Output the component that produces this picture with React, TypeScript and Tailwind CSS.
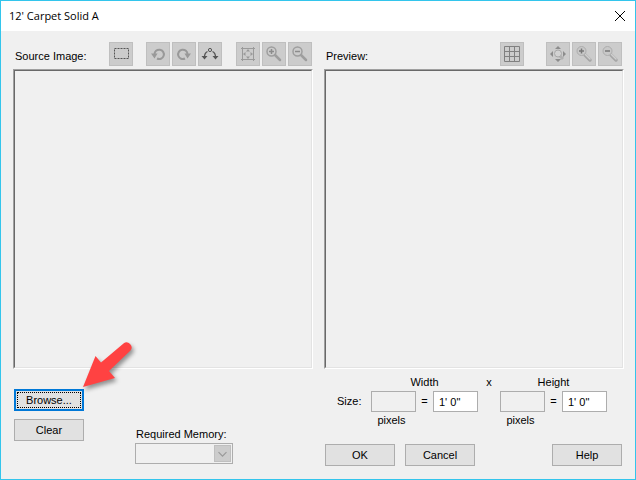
import { useState } from 'react';
import type { ButtonHTMLAttributes, ReactNode } from 'react';
import { twMerge } from 'tailwind-merge';

function ToolButton({ label, className, children }: { label: string; className?: string; children: ReactNode }) {
  return (
    <button
      type="button"
      disabled
      aria-label={label}
      className={twMerge('size-6 shrink-0 border border-[#bfbfbf] bg-[#cccccc]', className)}
    >
      <svg viewBox="1 1 22 22" className="block size-full" fill="none" aria-hidden="true">
        {children}
      </svg>
    </button>
  );
}

function PushButton({ className, ...props }: ButtonHTMLAttributes<HTMLButtonElement>) {
  return (
    <button
      type="button"
      className={twMerge(
        'flex h-[22px] w-[70px] items-center justify-center border border-[#adadad] bg-[#e1e1e1] text-black',
        className,
      )}
      {...props}
    />
  );
}

function RotateIcon() {
  return (
    <>
      <path d="M8.5 12.5 A4.7 4.7 0 1 1 11 16.5" stroke="#999999" strokeWidth="2" />
      <path d="M5 11.5 H11.5 L8.5 16.5 Z" fill="#999999" />
    </>
  );
}

function FlatMagnifier({ plus }: { plus?: boolean }) {
  return (
    <>
      <circle cx="9.5" cy="9.5" r="4.5" stroke="#9e9e9e" strokeWidth="1.5" />
      <path d={plus ? 'M7 9.5 H12 M9.5 7 V12' : 'M7 9.5 H12'} stroke="#8c8c8c" strokeWidth="1.5" />
      <path d="M13 13 L18 18" stroke="#9e9e9e" strokeWidth="2.5" strokeLinecap="round" />
    </>
  );
}

function ShadedMagnifier({ plus }: { plus?: boolean }) {
  return (
    <>
      <path d="M13 13 L18 18" stroke="#a6a6a6" strokeWidth="3.5" strokeLinecap="round" />
      <path d="M13.5 12.5 L18 17" stroke="#cfcfcf" strokeWidth="1.5" strokeLinecap="round" />
      <circle cx="9.5" cy="9" r="4.5" fill="#c8c8c8" stroke="#adadad" />
      <path d={plus ? 'M7 9 H12 M9.5 6.5 V11.5' : 'M7 9 H12'} stroke="#777777" strokeWidth="1.5" />
    </>
  );
}

function ImagePane({ label }: { label: string }) {
  return (
    <div
      role="img"
      aria-label={label}
      className="mt-[3px] h-[300px] border border-t-[#a0a0a0] border-r-white border-b-white border-l-[#a0a0a0]"
    >
      <div className="h-full border border-t-[#696969] border-r-[#e3e3e3] border-b-[#e3e3e3] border-l-[#696969]" />
    </div>
  );
}

function SizeFields({ name, value, onChange }: { name: string; value: string; onChange: (value: string) => void }) {
  return (
    <div className="grid grid-cols-[45px_17px_45px] text-center">
      <label htmlFor={name} className="col-span-3 h-[18px] leading-[18px]">
        {name}
      </label>
      <input
        id={`${name}-pixels`}
        disabled
        className="h-[21px] w-full border border-[#adadad] bg-[#f0f0f0]"
      />
      <span className="leading-[21px]">=</span>
      <input
        id={name}
        value={value}
        onChange={(event) => onChange(event.target.value)}
        className="h-[21px] w-full border border-[#adadad] bg-white pl-[5px] outline-none"
      />
      <label htmlFor={`${name}-pixels`} className="pr-1 leading-4">
        pixels
      </label>
    </div>
  );
}

function PointerArrow() {
  return (
    <svg
      viewBox="0 0 60 56"
      className="pointer-events-none absolute -top-8 left-[67px] h-14 w-[60px] overflow-visible drop-shadow-[2px_3px_2px_rgba(0,0,0,0.4)]"
      aria-hidden="true"
    >
      <path
        d="M2 50 L14.5 19 L20 25.5 L42.5 6.5 A5 5 0 0 1 49.5 13.5 L28 34 L34 41 Z"
        fill="#ff4242"
      />
    </svg>
  );
}

export default function App() {
  const [width, setWidth] = useState('1\' 0"');
  const [height, setHeight] = useState('1\' 0"');

  return (
    <main className="border border-[#33c5ec] bg-[#f0f0f0] font-['Liberation_Sans',Arial,sans-serif] text-[11px] text-black">
      <header className="flex h-[30px] items-center justify-between bg-white pr-[10px] pl-2">
        <h1 className="font-['Open_Sans','Noto_Sans',sans-serif] text-[11px]">12&apos; Carpet Solid A</h1>
        <button type="button" aria-label="Close">
          <svg viewBox="0 0 10 10" className="block size-[10px]" aria-hidden="true">
            <path d="M0 0 L10 10 M10 0 L0 10" stroke="#000000" />
          </svg>
        </button>
      </header>

      <div className="flex gap-[11px] pt-[11px] pr-[11px] pb-[13px] pl-3">
        <section className="min-w-0 flex-1">
          <div className="flex h-6 items-center pr-px">
            <h2 className="mr-auto pt-1 pl-0.5 leading-4">Source Image:</h2>
            <ToolButton label="Select area" className="mr-[13px]">
              <rect x="5.5" y="6.5" width="14" height="10" stroke="#555555" strokeDasharray="2 1" />
            </ToolButton>
            <div className="mr-[14px] flex gap-0.5">
              <ToolButton label="Rotate left">
                <RotateIcon />
              </ToolButton>
              <ToolButton label="Rotate right">
                <g transform="matrix(-1 0 0 1 24 0)">
                  <RotateIcon />
                </g>
              </ToolButton>
              <ToolButton label="Rotate by angle">
                <circle cx="12" cy="8" r="1.6" stroke="#555555" />
                <path d="M9.5 9.5 Q6.5 11 6.5 15 M14.5 9.5 Q17.5 11 17.5 15" stroke="#555555" strokeWidth="1.3" />
                <path d="M3.5 14 H9.5 L6.5 17.5 Z M14.5 14 H20.5 L17.5 17.5 Z" fill="#555555" />
              </ToolButton>
            </div>
            <div className="flex gap-0.5">
              <ToolButton label="Fit to window">
                <path d="M5 6.5 H19 M5 17.5 H19 M6.5 5 V19 M17.5 5 V19" stroke="#9a9a9a" />
                <path d="M12 7 L14 9.5 H10 Z M12 17 L14 14.5 H10 Z M7 12 L9.5 10 V14 Z M17 12 L14.5 10 V14 Z" fill="#9a9a9a" />
              </ToolButton>
              <ToolButton label="Zoom in">
                <FlatMagnifier plus />
              </ToolButton>
              <ToolButton label="Zoom out">
                <FlatMagnifier />
              </ToolButton>
            </div>
          </div>
          <ImagePane label="Source image" />

          <div className="flex pl-px">
            <div className="relative flex flex-col gap-2 pt-5">
              <PushButton className="border-2 border-[#0078d7] outline-1 -outline-offset-4 outline-dotted outline-black">
                Browse...
              </PushButton>
              <PushButton>Clear</PushButton>
              <PointerArrow />
            </div>
            <div className="ml-[51px] pt-[57px]">
              <label htmlFor="memory" className="block h-[17px] pl-px leading-4">
                Required Memory:
              </label>
              <div className="relative w-[98px]">
                <select
                  id="memory"
                  disabled
                  className="block h-[21px] w-full appearance-none border border-[#adadad] bg-[#f0f0f0]"
                />
                <svg
                  viewBox="0 0 17 17"
                  className="pointer-events-none absolute top-0.5 right-0.5 size-[17px] border border-[#bfbfbf] bg-[#cccccc]"
                  fill="none"
                  aria-hidden="true"
                >
                  <path d="M4 7 L8.5 11.5 L13 7" stroke="#999999" strokeWidth="1.3" />
                </svg>
              </div>
            </div>
          </div>
        </section>

        <section className="min-w-0 flex-1">
          <div className="flex h-6 items-center pr-0.5">
            <h2 className="mr-auto pt-1 pl-0.5 leading-4">Preview:</h2>
            <ToolButton label="Show grid" className="mr-[22px]">
              <path
                d="M4.5 4.5 H19.5 V19.5 H4.5 Z M9.5 4.5 V19.5 M14.5 4.5 V19.5 M4.5 9.5 H19.5 M4.5 14.5 H19.5"
                stroke="#808080"
              />
            </ToolButton>
            <div className="flex gap-0.5">
              <ToolButton label="Fit preview">
                <path d="M14 14 L17 17" stroke="#b0b0b0" strokeWidth="3" />
                <circle cx="12" cy="11.5" r="3.5" fill="#d2d2d2" stroke="#a8a8a8" />
                <path d="M12 4 L15 7 H9 Z M12 20 L15 17 H9 Z M4 12 L7 9 V15 Z M20 12 L17 9 V15 Z" fill="#8c8c8c" />
              </ToolButton>
              <ToolButton label="Zoom preview in">
                <ShadedMagnifier plus />
              </ToolButton>
              <ToolButton label="Zoom preview out">
                <ShadedMagnifier />
              </ToolButton>
            </div>
          </div>
          <ImagePane label="Preview" />

          <div className="flex pt-1 pl-[13px]">
            <span className="w-[34px] pt-[18px] leading-[21px]">Size:</span>
            <SizeFields name="Width" value={width} onChange={setWidth} />
            <span className="w-[22px] text-center leading-[18px]">x</span>
            <SizeFields name="Height" value={height} onChange={setHeight} />
          </div>

          <div className="mt-4 flex gap-[10px] pr-0.5 pl-px">
            <PushButton>OK</PushButton>
            <PushButton>Cancel</PushButton>
            <PushButton className="ml-auto">Help</PushButton>
          </div>
        </section>
      </div>
    </main>
  );
}
